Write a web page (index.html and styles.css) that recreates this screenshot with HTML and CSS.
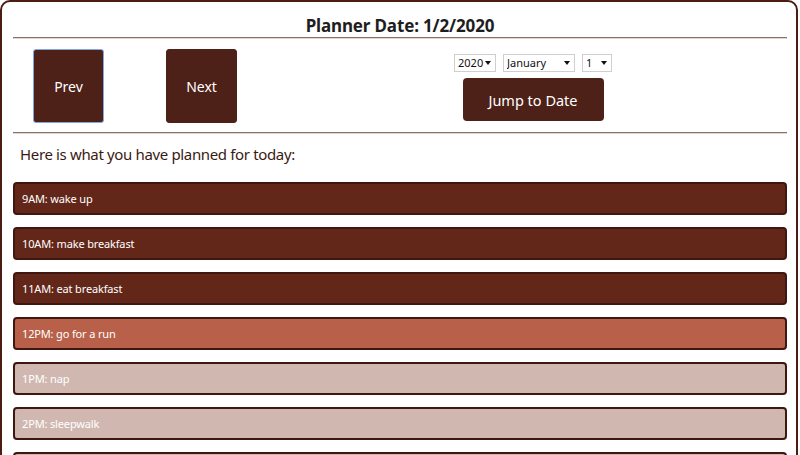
FILE: index.html
```html
<!DOCTYPE html>
<html>
<head>
<meta charset="utf-8">
<link rel="stylesheet" href="styles.css">
</head>
<body>
<div class="planner">
  <h1 class="title">Planner Date: 1/2/2020</h1>
  <hr class="rule">
  <div class="controls">
    <div class="nav">
      <button class="nav-btn focused">Prev</button>
      <button class="nav-btn">Next</button>
    </div>
    <div class="jump">
      <div class="selects">
        <span class="sel-wrap sel-year"><select class="sel"><option>2020</option></select></span>
        <span class="sel-wrap sel-month"><select class="sel"><option>January</option></select></span>
        <span class="sel-wrap sel-day"><select class="sel"><option>1</option></select></span>
      </div>
      <button class="jump-btn">Jump to Date</button>
    </div>
  </div>
  <hr class="rule">
  <p class="intro">Here is what you have planned for today:</p>
  <div class="rows">
    <div class="row past">9AM: wake up</div>
    <div class="row past">10AM: make breakfast</div>
    <div class="row past">11AM: eat breakfast</div>
    <div class="row present">12PM: go for a run</div>
    <div class="row future">1PM: nap</div>
    <div class="row future">2PM: sleepwalk</div>
    <div class="row future"></div>
  </div>
</div>
</body>
</html>
```
FILE: styles.css
```css
html, body {
  margin: 0;
  padding: 0;
  background: #fff;
  font-family: "Noto Sans", "Open Sans", sans-serif;
}
.planner {
  box-sizing: border-box;
  width: 798px;
  min-height: 600px;
  border: 2px solid #4a1c12;
  border-radius: 10px;
  padding: 0 9px 0 11px;
}
.title {
  margin: 0;
  padding-top: 13px;
  height: 22px;
  line-height: 22px;
  text-align: center;
  font-size: 17px;
  font-weight: 700;
  letter-spacing: -0.15px;
  color: #1e1e1e;
}
.rule {
  margin: 0;
  border: 0;
  border-top: 1px solid #8e6e66;
  border-bottom: 1px solid #e0d6d3;
  height: 0;
}
.controls {
  display: flex;
  align-items: flex-start;
  padding: 10px 0 9px 20px;
}
.nav {
  display: flex;
  gap: 62px;
}
.nav-btn {
  box-sizing: border-box;
  width: 71px;
  height: 74px;
  background: #4e2118;
  color: #fff;
  border: 1px solid #4e2118;
  border-radius: 3px;
  font-family: inherit;
  font-size: 14px;
  padding: 0;
}
.nav-btn.focused {
  border-color: #7ea6e8;
}
.jump {
  margin-left: 196px;
  width: 200px;
  display: flex;
  flex-direction: column;
  align-items: center;
  padding-top: 5px;
}
.selects {
  display: flex;
  gap: 7px;
}
.sel-wrap {
  position: relative;
  display: block;
  height: 18px;
}
.sel-wrap::after {
  content: "";
  position: absolute;
  right: 5px;
  top: 7px;
  border-left: 3px solid transparent;
  border-right: 3px solid transparent;
  border-top: 4px solid #111;
  pointer-events: none;
}
.sel {
  -webkit-appearance: none;
  appearance: none;
  display: block;
  box-sizing: border-box;
  width: 100%;
  height: 18px;
  font-family: inherit;
  font-size: 11px;
  line-height: 16px;
  border: 1px solid #cfcfcf;
  background: #fff;
  color: #111;
  padding: 0 0 0 3px;
  border-radius: 0;
  margin: 0;
}
.sel-year { width: 42px; }
.sel-month { width: 72px; }
.sel-day { width: 30px; }
.jump-btn {
  display: block;
  margin-top: 6px;
  width: 141px;
  height: 43px;
  background: #4e2118;
  color: #fff;
  border: 0;
  border-radius: 4px;
  font-family: inherit;
  font-size: 14.5px;
  padding: 0;
}
.intro {
  margin: 10px 0 0 7px;
  font-size: 15px;
  line-height: 20px;
  letter-spacing: -0.35px;
  color: #3a1a12;
}
.rows {
  margin-top: 18px;
  display: flex;
  flex-direction: column;
  gap: 12px;
}
.row {
  box-sizing: border-box;
  height: 33px;
  border: 2px solid #3f1710;
  border-radius: 4px;
  padding: 0 7px;
  display: flex;
  align-items: center;
  font-size: 11px;
  letter-spacing: -0.15px;
  color: #fff;
}
.past { background: #63271a; }
.present { background: #b86049; }
.future { background: #d0b8b1; }
```
